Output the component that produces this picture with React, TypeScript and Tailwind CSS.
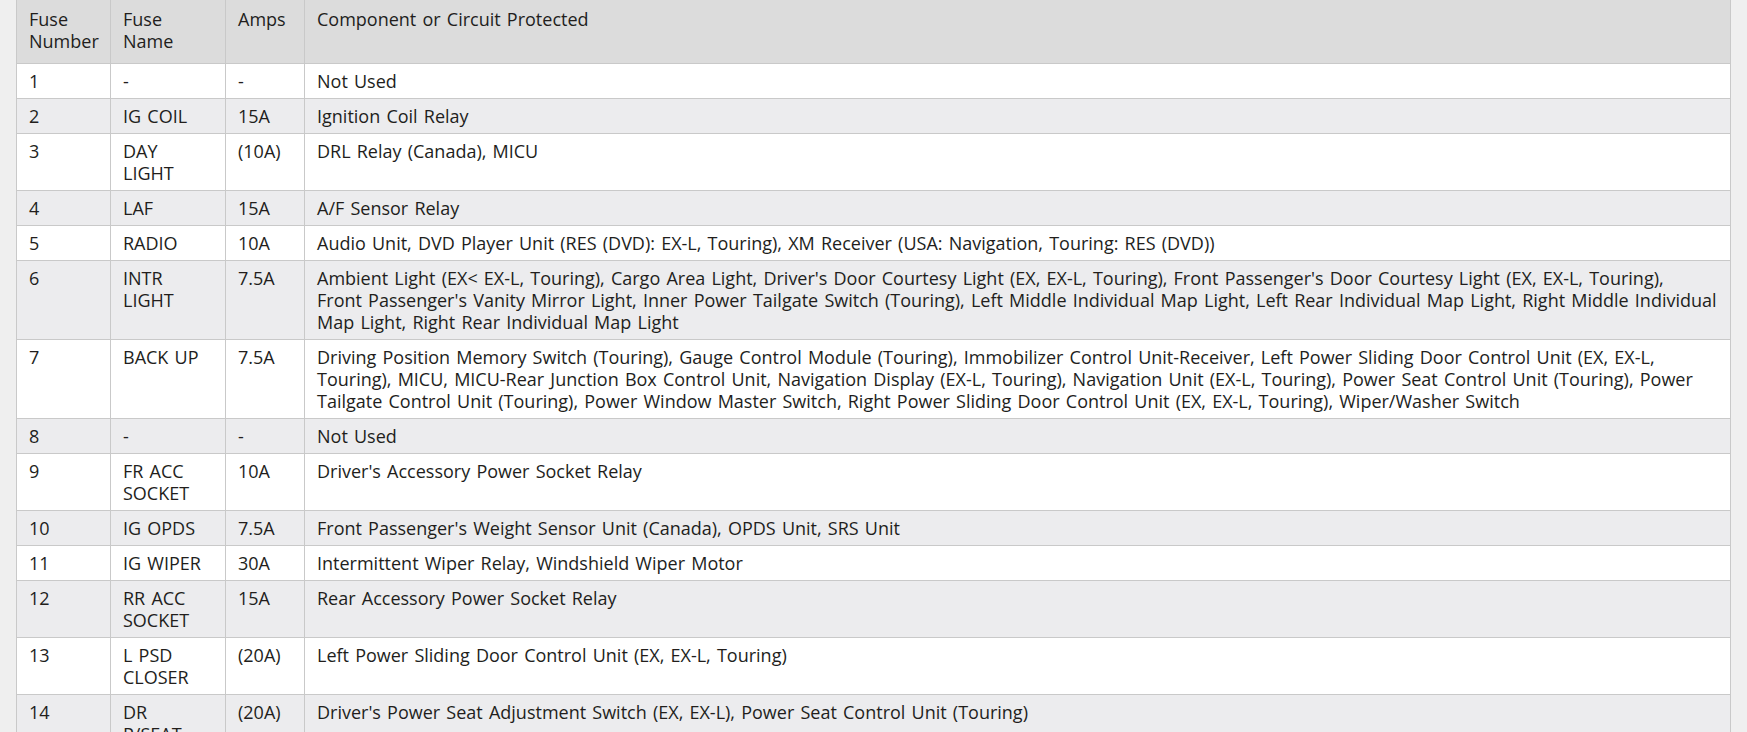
import React from "react";

type Row = { n: string; name: string[]; amps: string; comp: string[] };

const rows: Row[] = [
  { n: "1", name: ["-"], amps: "-", comp: ["Not Used"] },
  { n: "2", name: ["IG COIL"], amps: "15A", comp: ["Ignition Coil Relay"] },
  { n: "3", name: ["DAY", "LIGHT"], amps: "(10A)", comp: ["DRL Relay (Canada), MICU"] },
  { n: "4", name: ["LAF"], amps: "15A", comp: ["A/F Sensor Relay"] },
  {
    n: "5",
    name: ["RADIO"],
    amps: "10A",
    comp: ["Audio Unit, DVD Player Unit (RES (DVD): EX-L, Touring), XM Receiver (USA: Navigation, Touring: RES (DVD))"],
  },
  {
    n: "6",
    name: ["INTR", "LIGHT"],
    amps: "7.5A",
    comp: [
      "Ambient Light (EX< EX-L, Touring), Cargo Area Light, Driver's Door Courtesy Light (EX, EX-L, Touring), Front Passenger's Door Courtesy Light (EX, EX-L, Touring),",
      "Front Passenger's Vanity Mirror Light, Inner Power Tailgate Switch (Touring), Left Middle Individual Map Light, Left Rear Individual Map Light, Right Middle Individual",
      "Map Light, Right Rear Individual Map Light",
    ],
  },
  {
    n: "7",
    name: ["BACK UP"],
    amps: "7.5A",
    comp: [
      "Driving Position Memory Switch (Touring), Gauge Control Module (Touring), Immobilizer Control Unit-Receiver, Left Power Sliding Door Control Unit (EX, EX-L,",
      "Touring), MICU, MICU-Rear Junction Box Control Unit, Navigation Display (EX-L, Touring), Navigation Unit (EX-L, Touring), Power Seat Control Unit (Touring), Power",
      "Tailgate Control Unit (Touring), Power Window Master Switch, Right Power Sliding Door Control Unit (EX, EX-L, Touring), Wiper/Washer Switch",
    ],
  },
  { n: "8", name: ["-"], amps: "-", comp: ["Not Used"] },
  { n: "9", name: ["FR ACC", "SOCKET"], amps: "10A", comp: ["Driver's Accessory Power Socket Relay"] },
  {
    n: "10",
    name: ["IG OPDS"],
    amps: "7.5A",
    comp: ["Front Passenger's Weight Sensor Unit (Canada), OPDS Unit, SRS Unit"],
  },
  { n: "11", name: ["IG WIPER"], amps: "30A", comp: ["Intermittent Wiper Relay, Windshield Wiper Motor"] },
  { n: "12", name: ["RR ACC", "SOCKET"], amps: "15A", comp: ["Rear Accessory Power Socket Relay"] },
  {
    n: "13",
    name: ["L PSD", "CLOSER"],
    amps: "(20A)",
    comp: ["Left Power Sliding Door Control Unit (EX, EX-L, Touring)"],
  },
  {
    n: "14",
    name: ["DR", "P/SEAT"],
    amps: "(20A)",
    comp: ["Driver's Power Seat Adjustment Switch (EX, EX-L), Power Seat Control Unit (Touring)"],
  },
];

function Lines({ lines }: { lines: string[] }) {
  return (
    <>
      {lines.map((l, i) => (
        <div key={i} className="whitespace-nowrap">
          {l}
        </div>
      ))}
    </>
  );
}

export default function App() {
  return (
    <div
      className="min-h-screen bg-[#efefef] px-[16px] text-[18px] leading-[22px] text-[#221e1c] [word-spacing:1.5px]"
      style={{ fontFamily: '"Open Sans", "Noto Sans", sans-serif' }}
    >
      <div className="border-x border-[#c9c9c9] bg-white">
        <div className="grid h-[64px] grid-cols-[94px_115px_79px_1fr] border-b border-[#c9c9c9] bg-[#dcdcdc]">
          <div className="border-r border-[#c9c9c9] px-3 pt-[8px]">
            <div>Fuse</div>
            <div>Number</div>
          </div>
          <div className="border-r border-[#c9c9c9] px-3 pt-[8px]">
            <div>Fuse</div>
            <div>Name</div>
          </div>
          <div className="border-r border-[#c9c9c9] px-3 pt-[8px]">Amps</div>
          <div className="px-3 pt-[8px]">Component or Circuit Protected</div>
        </div>
        {rows.map((r, i) => (
          <div
            key={r.n}
            className={
              "grid grid-cols-[94px_115px_79px_1fr] border-b border-[#c9c9c9] " +
              (i % 2 === 0 ? "bg-white" : "bg-[#ececee]")
            }
          >
            <div className="border-r border-[#c9c9c9] px-3 py-[6px]">{r.n}</div>
            <div className="border-r border-[#c9c9c9] px-3 py-[6px]">
              <Lines lines={r.name} />
            </div>
            <div className="border-r border-[#c9c9c9] px-3 py-[6px]">{r.amps}</div>
            <div className="px-3 py-[6px]">
              <Lines lines={r.comp} />
            </div>
          </div>
        ))}
      </div>
    </div>
  );
}
